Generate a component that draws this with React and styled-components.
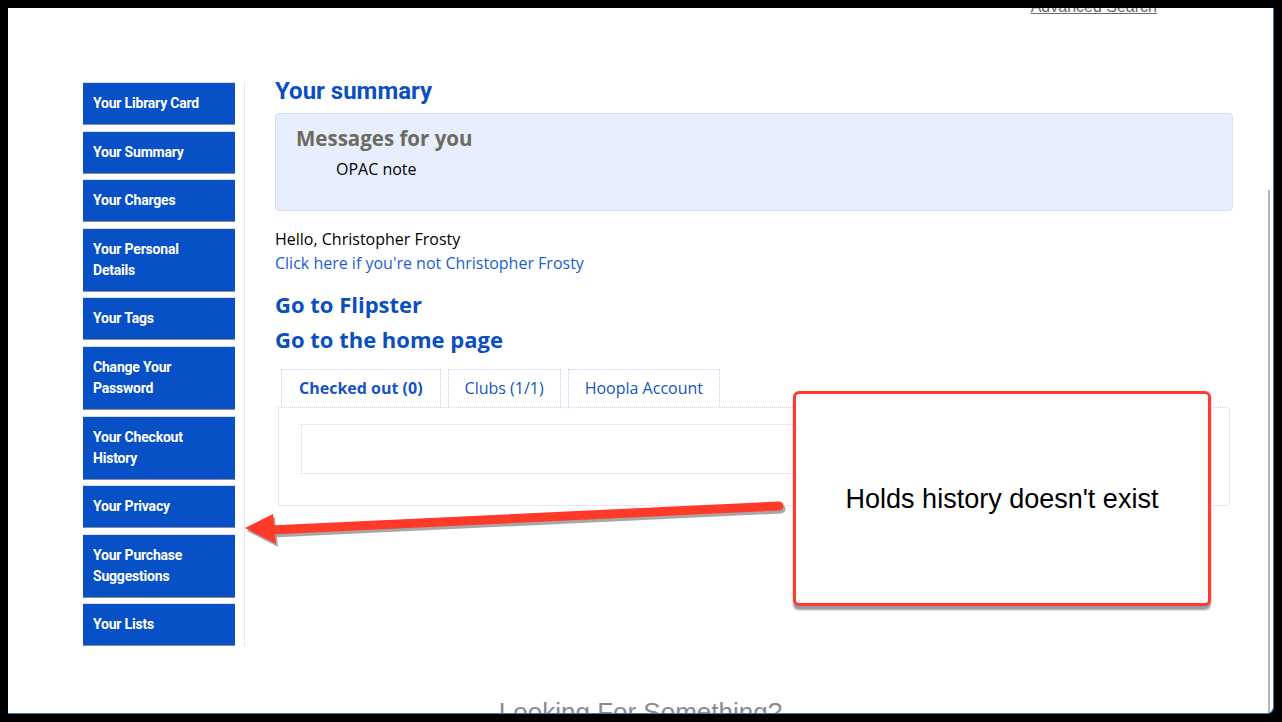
import React from "react";
import styled, { createGlobalStyle } from "styled-components";

const GlobalStyle = createGlobalStyle`
  html, body {
    margin: 0;
    padding: 0;
    background: #000;
    overflow: hidden;
  }
  body {
    font-family: "Open Sans", "Noto Sans", sans-serif;
  }
`;

const Frame = styled.div`
  width: 1282px;
  height: 722px;
  padding: 8px 0 0 8px;
  box-sizing: border-box;
`;

const Window = styled.div`
  position: relative;
  width: 1266px;
  height: 706px;
  box-sizing: border-box;
  background: #fff;
  overflow: hidden;
  border-right: 1px solid #3b7cb6;
  border-bottom: 1px solid #3b7cb6;
  border-bottom-right-radius: 7px;
`;

const TopBar = styled.div`
  display: flex;
  justify-content: flex-end;
  height: 18px;
  margin-top: -10px;
  padding-right: 116px;
`;

const AdvancedLink = styled.a`
  font-family: "Liberation Sans", Arial, sans-serif;
  font-size: 16px;
  line-height: 18px;
  color: #6a6a6a;
  text-decoration: underline;
`;

const Layout = styled.div`
  display: flex;
  align-items: flex-start;
  margin-top: 67px;
  padding-left: 75px;
`;

const Sidebar = styled.nav`
  width: 161px;
  border-right: 1px dotted #c9c9f2;
  display: flex;
  flex-direction: column;
  gap: 6.6px;
`;

const SideButton = styled.a`
  display: block;
  width: 152px;
  box-sizing: border-box;
  padding: 10px 10px;
  background: #0750c6;
  border-bottom: 1px solid #8c8c9c;
  box-shadow: 0 -1px 0 #dcdcf4;
  color: #fff;
  font-family: Roboto, "Liberation Sans", sans-serif;
  font-weight: 700;
  font-size: 14px;
  line-height: 21px;
  letter-spacing: -0.2px;
  text-decoration: none;
`;

const Main = styled.main`
  width: 958px;
  margin-left: 30px;
  margin-top: -6px;
`;

const PageTitle = styled.h1`
  margin: 0;
  font-family: Roboto, "Liberation Sans", sans-serif;
  font-size: 24px;
  line-height: 28px;
  font-weight: 700;
  color: #0a4fc2;
`;

const MessagesBox = styled.section`
  margin-top: 8px;
  height: 98px;
  box-sizing: border-box;
  padding: 10px 20px 0;
  background: #e7eefd;
  border: 1px solid #d7dff6;
  border-radius: 4px;
`;

const MessagesTitle = styled.h2`
  margin: 0;
  font-size: 20.5px;
  line-height: 28px;
  font-weight: 700;
  color: #6d6b5d;
`;

const Note = styled.div`
  margin: 5px 0 0 40px;
  font-size: 16px;
  line-height: 24px;
  color: #000;
`;

const Greeting = styled.div`
  margin-top: 16px;
  font-size: 16px;
  line-height: 24px;
  color: #000;
`;

const TextLink = styled.a`
  display: block;
  font-size: 16px;
  line-height: 24px;
  color: #1b5dd3;
  text-decoration: none;
`;

const BigLink = styled.a`
  display: block;
  margin-top: ${(p) => (p.$first ? "12px" : "0")};
  font-size: 22px;
  line-height: 35px;
  font-weight: 700;
  color: #0b4fbf;
  text-decoration: none;
`;

const TabArea = styled.div`
  margin: 12px 0 0 3px;
  width: 952px;
`;

const TabList = styled.div`
  display: flex;
  gap: 7px;
  padding-left: 3px;
  position: relative;
  z-index: 1;
`;

const Tab = styled.a`
  display: block;
  height: 38px;
  box-sizing: border-box;
  padding: 0 ${(p) => (p.$active ? "17px" : "16px")};
  border: 1px dotted #c8c8f0;
  border-bottom: ${(p) => (p.$active ? "1px solid #fff" : "none")};
  margin-bottom: ${(p) => (p.$active ? "-1px" : "0")};
  background: #fff;
  font-size: 16px;
  line-height: 36px;
  font-weight: ${(p) => (p.$active ? 700 : 400)};
  color: #1553c4;
  text-decoration: none;
  white-space: nowrap;
`;

const TabPanel = styled.div`
  height: 99px;
  box-sizing: border-box;
  padding: 16px 0 0 22px;
  border: 1px dotted #cfcff2;
  border-radius: 0 4px 4px 4px;
`;

const EmptyBox = styled.div`
  width: 880px;
  height: 50px;
  box-sizing: border-box;
  border: 1px dotted #d2d2f2;
`;

const Footer = styled.div`
  margin-top: 52px;
  text-align: center;
  font-family: "Liberation Sans", Arial, sans-serif;
  font-size: 26px;
  line-height: 28px;
  color: #8a8a8a;
`;

const ScrollThumb = styled.div`
  position: absolute;
  left: 1260px;
  top: 182px;
  bottom: 0;
  width: 2px;
  background: #b4b4b4;
`;

const Callout = styled.div`
  position: absolute;
  left: 785px;
  top: 383px;
  width: 418px;
  height: 215px;
  box-sizing: border-box;
  border: 3px solid #ff3b2c;
  border-radius: 6px;
  background: #fff;
  box-shadow: 0 4px 2px rgba(110, 110, 130, 0.7);
  display: flex;
  align-items: center;
  justify-content: center;
  padding-top: 1px;
  font-family: "Liberation Sans", Arial, sans-serif;
  font-size: 27px;
  color: #000;
`;

const ArrowLayer = styled.svg`
  position: absolute;
  left: 0;
  top: 0;
  pointer-events: none;
`;

const menu = [
  "Your Library Card",
  "Your Summary",
  "Your Charges",
  ["Your Personal", "Details"],
  "Your Tags",
  ["Change Your", "Password"],
  ["Your Checkout", "History"],
  "Your Privacy",
  ["Your Purchase", "Suggestions"],
  "Your Lists",
];

const Arrow = () => (
  <ArrowLayer width="1265" height="705">
    <g fill="#8a8a8a" stroke="#8a8a8a" opacity="0.75" transform="translate(2 3)">
      <line x1="262" y1="522" x2="771" y2="498" strokeWidth="9" strokeLinecap="round" />
      <polygon points="237,520 265,506 268,536" stroke="none" />
    </g>
    <g fill="#ff3a28" stroke="#ff3a28">
      <line x1="262" y1="522" x2="771" y2="498" strokeWidth="9" strokeLinecap="round" />
      <polygon points="237,520 265,506 268,536" stroke="none" />
    </g>
  </ArrowLayer>
);

export default function App() {
  return (
    <Frame>
      <GlobalStyle />
      <Window>
        <TopBar>
          <AdvancedLink href="#">Advanced Search</AdvancedLink>
        </TopBar>
        <Layout>
          <Sidebar>
            {menu.map((item, i) => (
              <SideButton key={i} href="#">
                {Array.isArray(item) ? (
                  <>
                    {item[0]}
                    <br />
                    {item[1]}
                  </>
                ) : (
                  item
                )}
              </SideButton>
            ))}
          </Sidebar>
          <Main>
            <PageTitle>Your summary</PageTitle>
            <MessagesBox>
              <MessagesTitle>Messages for you</MessagesTitle>
              <Note>OPAC note</Note>
            </MessagesBox>
            <Greeting>Hello, Christopher Frosty</Greeting>
            <TextLink href="#">Click here if you're not Christopher Frosty</TextLink>
            <BigLink $first href="#">Go to Flipster</BigLink>
            <BigLink href="#">Go to the home page</BigLink>
            <TabArea>
              <TabList>
                <Tab $active href="#">Checked out (0)</Tab>
                <Tab href="#">Clubs (1/1)</Tab>
                <Tab href="#">Hoopla Account</Tab>
              </TabList>
              <TabPanel>
                <EmptyBox />
              </TabPanel>
            </TabArea>
          </Main>
        </Layout>
        <Footer>Looking For Something?</Footer>
        <ScrollThumb />
        <Arrow />
        <Callout>Holds history doesn't exist</Callout>
      </Window>
    </Frame>
  );
}
